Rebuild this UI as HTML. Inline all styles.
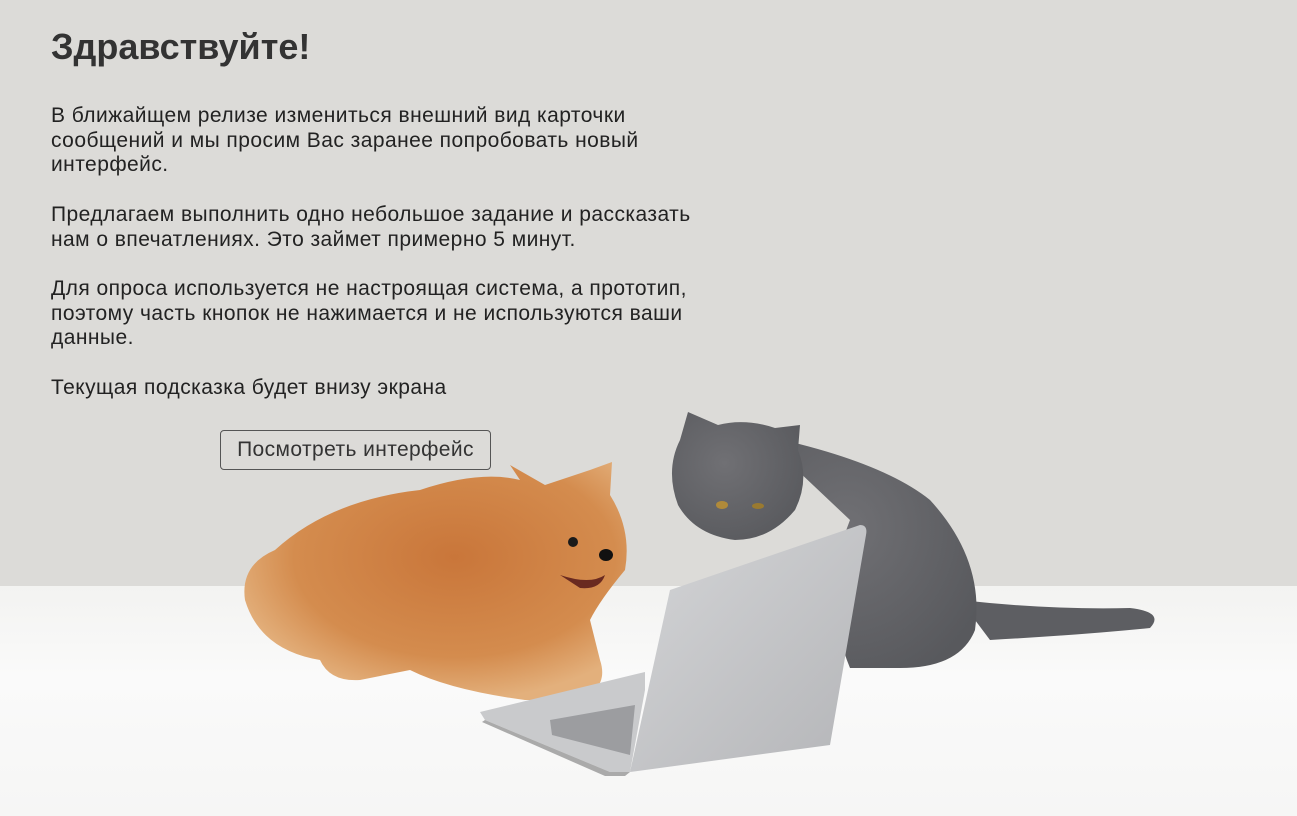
<!DOCTYPE html>
<html><head><meta charset="utf-8"><style>
html,body{margin:0;padding:0}
body{width:1297px;height:816px;overflow:hidden;position:relative;background:#dcdbd8;font-family:"Liberation Sans",sans-serif;color:#222}
.floor{position:absolute;left:0;top:586px;width:1297px;height:230px;background:linear-gradient(#f3f3f1,#fafafa 40%,#f6f6f5)}
svg{position:absolute;left:0;top:0}
h1{position:absolute;left:51px;top:26px;margin:0;font-size:36px;font-weight:bold;color:#333}
.t{position:absolute;left:51px;top:104px;width:720px;font-size:21px;letter-spacing:0.45px;line-height:24.7px;color:#222}
.t p{margin:0 0 24.7px}
.btn{position:absolute;left:220px;top:430px;width:269px;height:38px;border:1px solid #555;border-radius:4px;font-size:21px;letter-spacing:0.4px;line-height:38px;text-align:center;color:#333;box-sizing:content-box}
</style></head><body>
<div class="floor"></div>
<svg width="1297" height="816" viewBox="0 0 1297 816">
<defs>
<radialGradient id="dog" cx="0.55" cy="0.4" r="0.6"><stop offset="0" stop-color="#c9763a"/><stop offset="0.7" stop-color="#d48c4e"/><stop offset="1" stop-color="#e3b07c"/></radialGradient>
<radialGradient id="cat" cx="0.4" cy="0.4" r="0.7"><stop offset="0" stop-color="#707074"/><stop offset="1" stop-color="#58595d"/></radialGradient>
<linearGradient id="lap" x1="0" y1="0" x2="1" y2="1"><stop offset="0" stop-color="#d4d5d7"/><stop offset="1" stop-color="#b4b5b8"/></linearGradient>
</defs>
<path d="M960 600 Q1050 610 1130 608 Q1165 612 1150 628 Q1080 635 990 640 Z" fill="#5d5e62"/>
<path d="M760 435 Q880 460 930 500 Q985 560 975 630 Q960 668 900 668 L850 668 Q830 620 835 560 L850 520 Z" fill="url(#cat)"/>
<path d="M680 440 L688 412 L718 425 Q745 418 775 428 L800 425 L798 450 Q810 480 795 510 Q770 540 735 540 Q695 535 678 505 Q665 470 680 440 Z" fill="url(#cat)"/>
<ellipse cx="722" cy="505" rx="6" ry="4" fill="#b08a3a"/><ellipse cx="758" cy="506" rx="6" ry="3" fill="#9a7a30"/>
<path d="M245 600 Q240 565 275 550 Q330 500 420 490 Q480 470 520 480 L510 465 L545 485 L590 470 L612 462 L610 495 Q632 530 625 570 Q600 600 590 620 L600 660 Q610 690 575 700 L525 700 Q450 690 410 670 L360 680 Q330 682 320 660 Q260 650 245 600 Z" fill="url(#dog)"/>
<ellipse cx="573" cy="542" rx="5" ry="5" fill="#1a1a1a"/><ellipse cx="606" cy="555" rx="7" ry="6" fill="#111"/>
<path d="M560 575 Q590 585 605 575 Q600 590 580 588 Z" fill="#6a2a20"/>
<path d="M670 590 L860 525 Q868 525 866 535 L830 745 L630 772 Z" fill="url(#lap)"/>
<path d="M480 712 L645 672 L645 690 L630 772 Q620 775 610 772 L485 720 Z" fill="#c9cacc"/>
<path d="M550 720 L635 705 L630 755 L552 735 Z" fill="#9c9da0"/>
<path d="M485 720 L610 772 L630 772 L625 776 L605 776 L482 722 Z" fill="#aaa"/>
</svg>
<h1>Здравствуйте!</h1>
<div class="t">
<p>В ближайщем релизе измениться внешний вид карточки<br>сообщений и мы просим Вас заранее попробовать новый<br>интерфейс.</p>
<p>Предлагаем выполнить одно небольшое задание и рассказать<br>нам о впечатлениях. Это займет примерно 5 минут.</p>
<p>Для опроса используется не настроящая система, а прототип,<br>поэтому часть кнопок не нажимается и не используются ваши<br>данные.</p>
<p>Текущая подсказка будет внизу экрана</p>
</div>
<div class="btn">Посмотреть интерфейс</div>
</body></html>
